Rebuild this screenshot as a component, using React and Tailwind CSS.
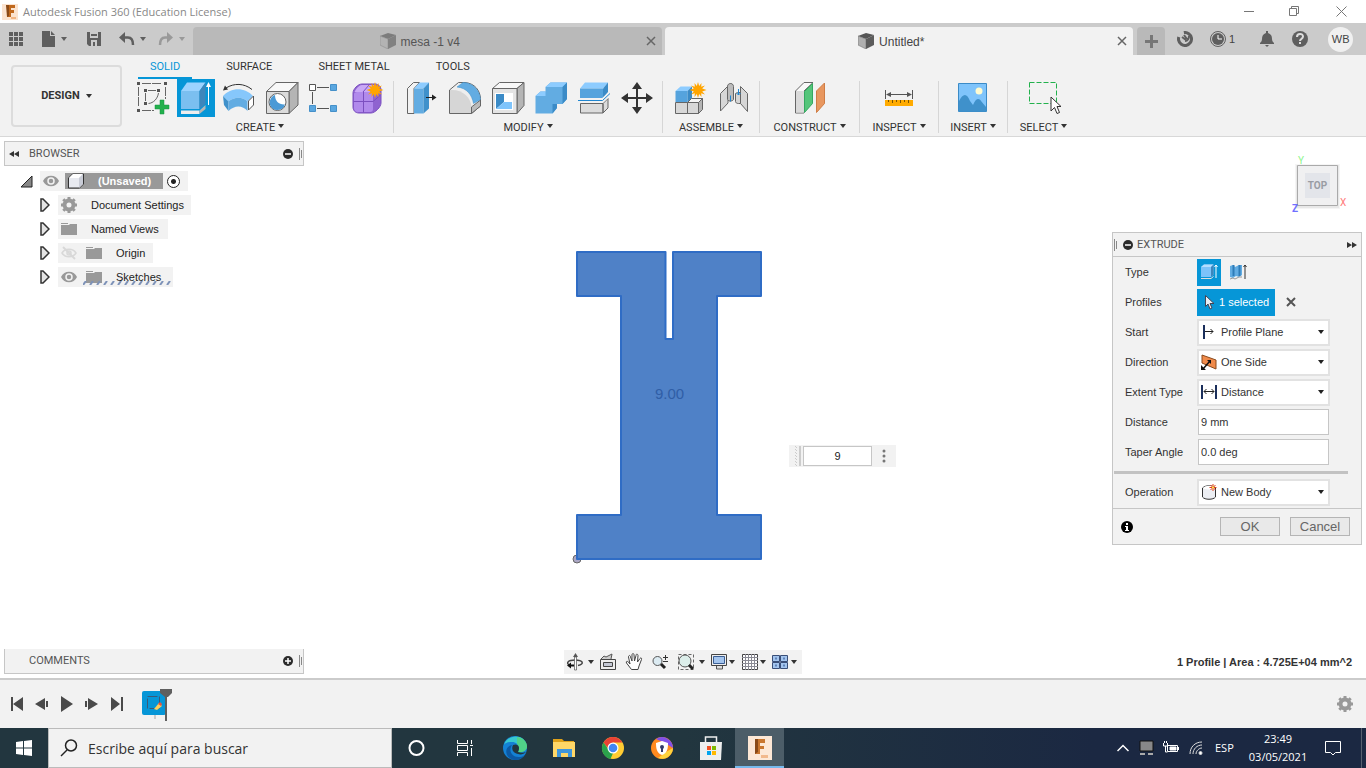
import { useState } from 'react'

const UI = "font-['Liberation_Sans',Arial,sans-serif]"
const CAPS = "font-['Roboto','Liberation_Sans',sans-serif]"
const SEGOE = "font-['Open_Sans','Noto_Sans',sans-serif]"

function Caret({ className = 'text-[#333]' }) {
  return (
    <svg width="6" height="4" viewBox="0 0 6 4" className={`shrink-0 ${className}`} fill="currentColor">
      <path d="M0 0h6L3 4z" />
    </svg>
  )
}

function Star({ x, y }) {
  return (
    <path
      transform={`translate(${x} ${y})`}
      fill="#ffa500"
      d="M0-8 1.200-4 3.500-7 3.200-3.300 7-4.500 4.200-1.500 8.500 0 4.200 1.500 7 4.500 3.200 3.300 3.500 7 1.200 4 0 8-1.200 4-3.500 7-3.200 3.300-7 4.500-4.200 1.500-8.500 0-4.200-1.500-7-4.500-3.200-3.300-3.500-7-1.200-4z"
    />
  )
}

function Icon({ children, size = 38 }) {
  return (
    <svg width={size} height={size} viewBox={`0 0 ${size} ${size}`} fill="none" className="block shrink-0">
      {children}
    </svg>
  )
}

const toolIcons = {
  sketch: (
    <Icon>
      <path d="M8 4.500h20M4.500 8v20M31.500 8v12M8 31.500h12" stroke="#666" strokeDasharray="9 1" />
      <path d="M14 11.500h8M11.500 14v8M24.500 14c-1 6-5 10-10 10.500" stroke="#666" />
      <path d="M3 3h3v3H3zM30 3h3v3h-3zM3 30h3v3H3zM10 10h3v3h-3zM23 10h3v3h-3zM10 23h3v3h-3z" fill="#555" />
      <path d="M26 21h4v5h5v4h-5v5h-4v-5h-5v-4h5z" fill="#22b14c" stroke="#159040" strokeWidth="0.5" />
    </Icon>
  ),
  extrude: (
    <Icon>
      <path d="M4 12 10 3.500h18.500L22.500 12z" fill="#9bd3ff" />
      <path d="M4 12h18.500v18H4z" fill="#7bbff0" />
      <path d="M22.500 12 28.500 3.500V25l-6 5z" fill="#3d86bb" />
      <path d="M4 31.500h18.500V35H4z" fill="#eee" />
      <path d="m22.500 31.500 6-5.500v4l-6 5z" fill="#b5b5b5" />
      <path d="M31.500 8v18" stroke="#fff" />
      <path d="m31.500 3 2.500 5h-5z" fill="#fff" />
    </Icon>
  ),
  revolve: (
    <Icon>
      <path d="M6 9c8-5 18-5 26 1.500" stroke="#333" />
      <path d="m3 11.500 2-5 3 4z" fill="#333" />
      <path d="M3 17c8-9 22-9 30 0l-5.500 5.500c-5-5-13-5-19 0z" fill="#86c7fb" />
      <path d="M3 17l5.500 5.500v9.500L4 26z" fill="#3f91cb" />
      <path d="M8.500 22.500c6-5 14-5 19 0V32c-5-6-13-6-19 0z" fill="#62ace2" />
      <path d="m28.500 22 5-5v9l-5 5z" fill="#fff" stroke="#555" />
    </Icon>
  ),
  hole: (
    <Icon>
      <path d="M3.500 12.500 13 3.500h22l-9 9z" fill="#f8f8f8" stroke="#666" />
      <path d="m26 12.500 9-9V26l-9 8.500z" fill="#b5b5b5" stroke="#666" />
      <path d="M3.500 12.500H26v22H3.500z" fill="#dcdcdc" stroke="#666" />
      <circle cx="14.500" cy="23" r="8.500" fill="#fff" stroke="#666" />
      <path d="M12 16c0 6 4 10 10 9.500a8 8 0 0 1-15 .500c-1-4 1-9 5-10z" fill="#4b9ad6" />
    </Icon>
  ),
  pattern: (
    <Icon>
      <path d="M11 8.500h12M6.500 13v12M11 29.500h12" stroke="#555" />
      <path d="M3.500 5.500h6v6h-6z" fill="#fff" stroke="#555" />
      <path d="M24.500 5.500h6v6h-6zM3.500 26.500h6v6h-6zM24.500 26.500h6v6h-6z" fill="#5aa7e0" stroke="#4590c9" />
    </Icon>
  ),
  form: (
    <Icon>
      <path d="M4 14c0-4 5-9 9-9h13c4 0 6 3 6 6v13c0 4-6 10-10 10H10c-4 0-6-3-6-6z" fill="#8f63d0" stroke="#7b4fc0" />
      <path d="M6 12c3-5 5-6 8-6h10c2 0 2 1 0 3l-3 4H8c-2 0-3 0-2-1z" fill="#c9a8f6" />
      <path d="M5 15c0-1 1-2 3-2h13c2 0 3 1 3 3v14c0 2-1 3-3 3H9c-3 0-4-2-4-4z" fill="#b18aec" />
      <path d="M4.500 22.500H24l7-6M14.500 13v20.500M14 13l6-7" stroke="#7b4fc0" />
      <Star x={26} y={11} />
    </Icon>
  ),
  pressPull: (
    <Icon>
      <path d="m5.500 9.500 6-6h6l-5.500 6v25H5.500z" fill="#f2f2f2" stroke="#666" />
      <path d="m12 9.500 5.500-6H27l-5.500 6z" fill="#8dccff" />
      <path d="M12 9.500h9.500v25H12z" fill="#62ace2" />
      <path d="m21.500 9.500 5.500-6v26l-5.500 5z" fill="#3f91cb" />
      <path d="M24 18.500h7" stroke="#222" />
      <path d="m30 15.500 4.500 3-4.500 3z" fill="#222" />
    </Icon>
  ),
  fillet: (
    <Icon>
      <path d="m4.500 11 9-7.500H20c10 1 15 8 15.500 16V27l-9 7.500h-22z" fill="#eee" stroke="#666" />
      <path d="M5 11c12-1 21 7 21.500 17v6H5z" fill="#d6d6d6" />
      <path d="m26.500 28 9-7v6l-9 7.500z" fill="#bbb" stroke="#666" />
      <path d="M18 3.500c10 0 17 8 17.500 17l-7 4C27 16 22 9 12 8z" fill="#62ace2" stroke="#3f91cb" strokeWidth="0.500" />
    </Icon>
  ),
  shell: (
    <Icon>
      <path d="m4.500 9.500 7-6H36l-7 6z" fill="#f8f8f8" stroke="#666" />
      <path d="m29 9.500 7-6v23l-7 8z" fill="#b5b5b5" stroke="#666" />
      <path d="M4.500 9.500H29v25H4.500z" fill="#e4e4e4" stroke="#666" />
      <path d="M7 14h18v17H7z" fill="#fff" />
      <path d="M8 15h8v8l-8 7z" fill="#3b8bc7" />
      <path d="M16 23h8v7H8z" fill="#7fc4fb" />
    </Icon>
  ),
  combine: (
    <Icon>
      <path d="m4.500 17 5-4.500h5V8l5-4.500H36V20l-4.500 5H26v4l-4.500 5.500h-17z" fill="#62ace2" />
      <path d="m4.500 17 5-4.500h5V17zM14.500 8l5-4.500H36L31.500 8z" fill="#8dccff" />
      <path d="M31.500 8 36 3.500V20l-4.500 5zM21.500 25H26v4l-4.500 5.500z" fill="#3b8bc7" />
    </Icon>
  ),
  split: (
    <Icon>
      <path d="m6 9.500 5-6h23l-5 6z" fill="#8dccff" />
      <path d="M6 9.500h23V19H6z" fill="#55a3dd" />
      <path d="m29 9.500 5-6V13l-5 6z" fill="#3b8bc7" />
      <path d="M6.500 24.500H29V34H6.500zM29 24.500l5-5V29l-5 5z" fill="#dcdcdc" stroke="#666" />
      <path d="M4 21.500h24.500l7.500-7" stroke="#f2f2f2" strokeWidth="4" />
      <path d="M4 21.500h24.500l7.500-7" stroke="#1f86d0" />
    </Icon>
  ),
  move: (
    <Icon>
      <path d="M20 7v24M8 19h24" stroke="#333" strokeWidth="2" />
      <path d="m20 3 5 7H15zM20 35l5-7H15zM4 19l7-5v10zM36 19l-7-5v10z" fill="#333" />
    </Icon>
  ),
  component: (
    <Icon>
      <path d="m4.500 12 5-4.500H21L16.500 12z" fill="#8dccff" />
      <path d="M4.500 12h12v11h-12z" fill="#55a3dd" />
      <path d="M16.500 12 21 7.500V19l-4.500 4z" fill="#3b8bc7" />
      <path d="M4.500 23.500h12v11h-12zM16.500 23.500h11v11h-11z" fill="#d8d8d8" stroke="#666" />
      <path d="m16.500 23.500 4-4h11l-4 4z" fill="#f6f6f6" stroke="#666" />
      <path d="m27.500 23.500 4-4v11l-4 4z" fill="#b5b5b5" stroke="#666" />
      <Star x={27} y={11} />
    </Icon>
  ),
  joint: (
    <Icon>
      <path d="M6.500 14.500 14 7c1-1 1-2 3-2h1v16c-1 1-3 1-4 0V24l-7.500 8z" fill="#d6d6d6" stroke="#666" />
      <path d="M13.500 7.500c0-4 6-4 6 0v13c-1 2-5 2-6 0z" fill="#bcbcbc" stroke="#666" />
      <path d="m26.500 7.500 7 7v18l-7-8h-2c-2 0-3-1-3-2v-8c1-1 3-1 5-1z" fill="#d6d6d6" stroke="#666" />
      <path d="M26.500 8v16.500" stroke="#666" />
      <path d="M16.500 16.500v6M24.500 10v6M22.500 14l2 2 2-2" stroke="#1f86d0" />
    </Icon>
  ),
  plane: (
    <Icon>
      <path d="M4.500 12 13 3.500h9l-9 8.500v22H4.500z" fill="#f8f8f8" stroke="#666" />
      <path d="M5 12h8v21.500H5z" fill="#dadada" />
      <path d="M13.500 12.500 21.500 4.500v20l-8 9z" fill="#55c57a" stroke="#35a860" />
      <path d="m25.500 12 8-8v20.500l-8 9z" fill="#e8975f" stroke="#cf7d45" />
    </Icon>
  ),
  measure: (
    <Icon>
      <path d="M5.500 11v9M32.500 11v9M8 15.500h22" stroke="#555" />
      <path d="m6 15.500 5-2.500v5zM32 15.500 27 13v5z" fill="#555" />
      <path d="M5 21h28v6H5z" fill="#ffab00" />
      <path d="M8.500 21v2M12.500 21v3M16.500 21v2M20.500 21v3M24.500 21v2M28.500 21v3" stroke="#7a5200" />
    </Icon>
  ),
  picture: (
    <Icon>
      <path d="M4.500 4.500h28v28h-28z" fill="#7fc4fb" stroke="#3b8bc7" />
      <circle cx="25" cy="12" r="3.500" fill="#fffbd0" />
      <path d="M5 22c4-8 8-8 11 0l3 4c3-7 6-7 8-4l5 6v4.500H5z" fill="#3f91cb" />
    </Icon>
  ),
  select: (
    <Icon>
      <path d="M4.500 3.500h27v21h-27z" stroke="#22b14c" strokeDasharray="5 2" />
      <path d="M26 18v14l3.500-3.500 2.500 6 2.500-1-2.500-6h4z" fill="#fff" stroke="#333" strokeLinejoin="round" />
    </Icon>
  ),
}

const groups = [
  { label: 'CREATE', width: 'w-[266px]', tools: ['sketch', 'extrude', 'revolve', 'hole', 'pattern', 'form'] },
  { label: 'MODIFY', width: 'w-[268px]', tools: ['pressPull', 'fillet', 'shell', 'combine', 'split', 'move'] },
  { label: 'ASSEMBLE', width: 'w-[96px]', tools: ['component', 'joint'] },
  { label: 'CONSTRUCT', width: 'w-[99px]', tools: ['plane'] },
  { label: 'INSPECT', width: 'w-[78px]', tools: ['measure'] },
  { label: 'INSERT', width: 'w-[68px]', tools: ['picture'] },
  { label: 'SELECT', width: 'w-[71px]', tools: ['select'] },
]

function TitleBar() {
  return (
    <header className={`flex h-[23px] items-center bg-white pl-[2px] text-[#888] ${SEGOE}`}>
      <svg width="16" height="16" viewBox="0 0 16 16" className="mr-[5px]">
        <path d="M0 0h16v16H0z" fill="#fbe3cf" />
        <path d="M4 1h9v3H9v2h3v3H9v4H5V4z" fill="#c0681c" />
        <path d="M4 1h3v11l-2 1z" fill="#8a4a18" />
        <path d="M9 13h5v2H9z" fill="#f3b683" />
      </svg>
      <h1 className="pt-px text-[11px]">Autodesk Fusion 360 (Education License)</h1>
      <div className="ml-auto mr-px flex">
        <button aria-label="Minimize" className="flex h-5 w-[46px] items-center justify-center">
          <svg width="11" height="11" stroke="#777"><path d="M0 5.500h10" /></svg>
        </button>
        <button aria-label="Restore" className="flex h-5 w-[45px] items-center justify-center">
          <svg width="11" height="11" fill="none" stroke="#777"><path d="M.5 2.500h7v7h-7zM2.500 2.500v-2h7v7h-2" /></svg>
        </button>
        <button aria-label="Close" className="flex h-5 w-[48px] items-center justify-center">
          <svg width="11" height="11" stroke="#777"><path d="m.5.5 10 10m0-10-10 10" /></svg>
        </button>
      </div>
    </header>
  )
}

function DocCube({ dim }) {
  return (
    <svg width="16" height="16" viewBox="0 0 16 16" className={dim ? 'opacity-60' : ''}>
      <path d="m0 3 8-3 8 2-8 4z" fill="#555" />
      <path d="m0 3 8 3v10l-8-4z" fill="#b0b0b0" stroke="#666" strokeWidth="0.500" />
      <path d="m8 6 8-4v10l-8 4z" fill="#5c5c5c" />
    </svg>
  )
}

function DocTab({ name, active }) {
  return (
    <div
      className={`flex flex-1 items-center rounded-t-[4px] pr-[5px] text-[12px] ${
        active ? 'bg-[#f2f2f2] text-[#444]' : 'bg-[#b9b9b9] text-[#555]'
      }`}
    >
      <button className="flex flex-1 items-center justify-center gap-[5px] pl-[2px]">
        <DocCube dim={!active} />
        <span className="pt-px">{name}</span>
      </button>
      <button aria-label={`Close ${name}`} className="flex size-3 items-center justify-center">
        <svg width="10" height="10" stroke="#666" strokeWidth="1.500"><path d="m1 1 8 8m0-8-8 8" /></svg>
      </button>
    </div>
  )
}

function AppBar() {
  return (
    <div className={`flex h-8 bg-[#cbcbcb] text-[#5f5f5f] ${UI}`}>
      <div className="flex w-[193px] shrink-0 items-center pl-2">
        <button aria-label="Data panel">
          <svg width="16" height="16" fill="currentColor">
            <path d="M1 1h4v4H1zM6 1h4v4H6zM11 1h4v4h-4zM1 6h4v4H1zM6 6h4v4H6zM11 6h4v4h-4zM1 11h4v4H1zM6 11h4v4H6zM11 11h4v4h-4z" />
          </svg>
        </button>
        <button aria-label="File" className="ml-[17px] flex items-center gap-1">
          <svg width="16" height="16" fill="currentColor"><path d="M1 0h8v5h5v11H1zM10 0l4 4h-4z" /></svg>
          <Caret className="text-[#5f5f5f]" />
        </button>
        <button aria-label="Save" className="ml-[19px]">
          <svg width="16" height="16" viewBox="0 0 16 16">
            <path d="M1 1h14v14H3l-2-2z" fill="currentColor" />
            <path d="M4 1h8v6H4zM5 9h6v6H5z" fill="#cbcbcb" />
            <path d="M5 3h6v2H5zM7 11h2v4H7z" fill="currentColor" />
          </svg>
        </button>
        <button aria-label="Undo" className="ml-[17px] flex items-center gap-[5px]">
          <svg width="16" height="16">
            <path d="M4 6.500h5c4 0 5 3 5 7.500" fill="none" stroke="currentColor" strokeWidth="2.500" />
            <path d="M0 6.500 6 1v11z" fill="currentColor" />
          </svg>
          <Caret className="text-[#5f5f5f]" />
        </button>
        <button aria-label="Redo" className="ml-3 flex items-center gap-[5px] text-[#999]">
          <svg width="16" height="16">
            <path d="M11 6.500H7C3 6.500 2 9.500 2 14" fill="none" stroke="currentColor" strokeWidth="2.500" />
            <path d="m15 6.500-6-5.500v11z" fill="currentColor" />
          </svg>
          <Caret className="text-[#999]" />
        </button>
      </div>
      <div className="flex flex-1 gap-[3px] pt-1">
        <DocTab name="mesa -1 v4" />
        <DocTab name="Untitled*" active />
      </div>
      <button aria-label="New tab" className="ml-1 mt-1 flex w-7 items-center justify-center rounded-t-[4px] bg-[#b9b9b9]">
        <svg width="14" height="14" fill="#777"><path d="M6 1h3v5h5v3H9v5H6V9H1V6h5z" /></svg>
      </button>
      <div className="flex w-[201px] shrink-0 items-center pl-3 text-[12px]">
        <button aria-label="Extensions">
          <svg width="16" height="16" fill="none" stroke="currentColor">
            <circle cx="8" cy="8" r="6.500" strokeWidth="3" strokeDasharray="33 8" transform="rotate(-100 8 8)" />
            <path d="m5 6 4 3M7 4l3 4M8 10c3 0 4-3 4-5" strokeWidth="2" />
          </svg>
        </button>
        <button className="ml-[17px] flex items-center gap-[3px] text-[11px] text-[#444]">
          <svg width="16" height="16" viewBox="0 0 16 16">
            <circle cx="8" cy="8" r="7.500" fill="none" stroke="#5f5f5f" />
            <circle cx="8" cy="8" r="6" fill="#5f5f5f" />
            <path d="M8 4v4h4" fill="none" stroke="#fff" />
          </svg>
          1
        </button>
        <button aria-label="Notifications" className="ml-[24px]">
          <svg width="16" height="16" fill="currentColor">
            <path d="M7 0h2v2c3 1 4 3 4 6 0 2 1 3 2 4v1H1v-1c1-1 2-2 2-4 0-3 1-5 4-6zM6 14h4l-2 2z" />
          </svg>
        </button>
        <button aria-label="Help" className="ml-[17px]">
          <svg width="16" height="16">
            <circle cx="8" cy="8" r="8" fill="currentColor" />
            <path d="M5 6c0-4 6-4 6-.5C11 8 8 8 8 10M8 11v2" fill="none" stroke="#ddd" strokeWidth="2" />
          </svg>
        </button>
        <button className="ml-5 size-[25px] rounded-full bg-[#f0f0f0] text-[11px] text-[#444]">WB</button>
      </div>
    </div>
  )
}

function Ribbon({ tool, onTool }) {
  return (
    <div className={`flex h-[82px] border-b border-[#d8d8d8] bg-[#f2f2f2] text-[11px] text-[#333] ${CAPS}`}>
      <button className="ml-[11px] mt-[10px] flex h-[62px] w-[111px] items-center justify-center gap-[6px] rounded-[4px] border-2 border-[#dcdcdc] font-bold">
        <span className="pt-px">DESIGN</span>
        <Caret />
      </button>
      <div className="ml-[5px] flex-1">
        <nav className="flex h-6 gap-[22px] pl-[11px]">
          {['SOLID', 'SURFACE', 'SHEET METAL', 'TOOLS'].map(t => (
            <button
              key={t}
              className={`border-b-2 px-3 pt-[2px] ${t === 'SOLID' ? 'border-[#0696d7] text-[#0696d7]' : 'border-transparent'}`}
            >
              {t}
            </button>
          ))}
        </nav>
        <div className="flex">
          {groups.map((g, i) => (
            <div key={g.label} className="flex">
              {i > 0 && <span className="mt-[2px] h-[52px] w-px bg-[#d6d6d6]" />}
              <div className={`flex flex-col items-center ${g.width}`}>
                <div className="flex gap-[5px]">
                  {g.tools.map(t => (
                    <button
                      key={t}
                      aria-label={t}
                      onClick={() => onTool(t)}
                      className={t === tool ? 'bg-[#0696d7]' : ''}
                    >
                      {toolIcons[t]}
                    </button>
                  ))}
                </div>
                <button className="flex h-5 items-center gap-[3px]">
                  <span className="pt-[2px]">{g.label}</span>
                  <Caret className="mb-[2px] text-[#333]" />
                </button>
              </div>
            </div>
          ))}
        </div>
      </div>
    </div>
  )
}

function Grip() {
  return (
    <svg width="4" height="12" stroke="#888" className="shrink-0"><path d="M.5 0v12M2.500 2v8" /></svg>
  )
}

function RoundSign({ plus }) {
  return (
    <svg width="10" height="10" viewBox="0 0 10 10" className="block shrink-0">
      <circle cx="5" cy="5" r="5" fill="#2b2b2b" />
      <path d={plus ? 'M2 5h6M5 2v6' : 'M2 5h6'} stroke="#fff" strokeWidth="1.500" />
    </svg>
  )
}

function DoubleArrow({ flip }) {
  return (
    <svg width="10" height="6" fill="#333" className={flip ? 'block rotate-180' : 'block'}><path d="M5 0v6L0 3zM10 0v6L5 3z" /></svg>
  )
}

function Eye({ off }) {
  if (off) {
    return (
      <svg width="16" height="16" viewBox="0 0 16 16" fill="none" stroke="#d8d8d8" className="shrink-0">
        <path d="M1 8c3-5 11-5 14 0-3 5-11 5-14 0z" strokeWidth="1.500" />
        <circle cx="8" cy="8" r="2" strokeWidth="1.500" />
        <path d="m2 2 12 12" strokeWidth="2" />
      </svg>
    )
  }
  return (
    <svg width="16" height="16" viewBox="0 0 16 16" className="shrink-0">
      <path d="M0 8c3-7 13-7 16 0-3 7-13 7-16 0z" fill="#999" />
      <circle cx="8" cy="8" r="3" fill="#999" stroke="#f2f2f2" strokeWidth="1.500" />
    </svg>
  )
}

function Folder() {
  return (
    <svg width="16" height="14" fill="#999" className="shrink-0"><path d="M0 1h7v1H0zM0 3h8l1-1h7v11H0z" /></svg>
  )
}

function Gear({ color = '#999' }) {
  return (
    <svg width="16" height="16" viewBox="0 0 16 16" className="shrink-0">
      <circle cx="8" cy="8" r="4.500" fill="none" stroke={color} strokeWidth="4" />
      <path d="M8 0v3M8 13v3M0 8h3M13 8h3M2.300 2.300l2 2M11.700 11.700l2 2M13.700 2.300l-2 2M4.300 11.700l-2 2" stroke={color} strokeWidth="3" />
    </svg>
  )
}

function TreeRow({ children, label }) {
  return (
    <li className="flex h-5 items-center pl-[35px]">
      <button aria-label={`Expand ${label}`} className="mr-2">
        <svg width="11" height="14" viewBox="0 0 11 14" fill="#e4e4e4" stroke="#333" strokeWidth="1.500">
          <path d="M2 1h2l6 6-6 6H2z" />
        </svg>
      </button>
      {children}
    </li>
  )
}

function Browser() {
  return (
    <aside className="w-[300px] text-[11px] text-[#222]">
      <div className={`flex h-[25px] items-center border border-[#c6c6c6] bg-[#f2f2f2] pl-1 text-[#555] ${CAPS}`}>
        <button aria-label="Collapse"><DoubleArrow /></button>
        <h2 className="ml-[10px] flex-1 pt-px">BROWSER</h2>
        <button aria-label="Minimize browser" className="mr-[6px]"><RoundSign /></button>
        <Grip />
      </div>
      <ul className="mt-[5px] flex flex-col gap-1">
        <li className="flex h-5 items-center pl-4">
          <button aria-label="Collapse document" className="mr-[7px]">
            <svg width="13" height="13" viewBox="0 0 13 13"><path d="M1 12h11V1z" fill="#888" stroke="#222" /></svg>
          </button>
          <div className="flex h-5 items-center gap-1 bg-[#f2f2f2] pl-[3px] pr-2">
            <Eye />
            <span className="ml-[2px] flex h-4 w-[98px] items-center bg-[#999] pl-[2px] font-bold text-white">
              <svg width="18" height="16" viewBox="0 0 18 16" className="mr-[13px]">
                <path d="m1.500 5 4-4h11v10l-4 4h-11z" fill="#e8eaf0" stroke="#333" />
                <path d="M2 5h10l4-4H6z" fill="#fff" />
                <path d="M12 5v10l4-4V1z" fill="#c9ccd6" />
              </svg>
              (Unsaved)
            </span>
            <input type="radio" name="active" aria-label="Activate component" defaultChecked className="size-[13px] appearance-none rounded-full border border-[#222] bg-white bg-[radial-gradient(circle,#222_0_2px,transparent_3px)]" />
          </div>
        </li>
        <TreeRow label="Document Settings">
          <span className="flex h-5 items-center bg-[#f2f2f2] pl-[3px] pr-[7px]"><Gear /><span className="ml-[14px]">Document Settings</span></span>
        </TreeRow>
        <TreeRow label="Named Views">
          <span className="flex h-5 items-center bg-[#f2f2f2] pl-[3px] pr-[9px]"><Folder /><span className="ml-[14px]">Named Views</span></span>
        </TreeRow>
        <TreeRow label="Origin">
          <span className="flex h-5 items-center bg-[#f2f2f2] pl-[3px] pr-2"><Eye off /><span className="w-[9px]" /><Folder /><span className="ml-[14px]">Origin</span></span>
        </TreeRow>
        <TreeRow label="Sketches">
          <span className="relative flex h-5 items-center bg-[#f2f2f2] pl-[3px] pr-3">
            <Eye /><span className="w-[9px]" /><Folder /><span className="ml-[14px]">Sketches</span>
            <svg width="90" height="4" stroke="#7d92b8" strokeWidth="2" className="absolute bottom-[2px] left-[25px]">
              {Array.from({ length: 13 }, (_, i) => <path key={i} d={`M${i * 7} 4l3-4`} />)}
            </svg>
          </span>
        </TreeRow>
      </ul>
    </aside>
  )
}

function ViewCube() {
  return (
    <svg width="60" height="62" viewBox="0 0 60 62" className="mr-3 mt-[15px] self-end font-['Roboto',sans-serif] text-[10px]">
      <path d="M5 12h45v45H5z" fill="#000" opacity="0.04" />
      <path d="M6 13h43v43H6z" fill="#000" opacity="0.05" />
      <path d="M7.500 13.500h40v40h-40z" fill="#f0f0f1" stroke="#aaa" />
      <path d="M15 21h25v25H15z" fill="#e3e5ea" />
      <text x="27.500" y="37" textAnchor="middle" fill="#999ca3" className="font-bold">TOP</text>
      <text x="8" y="12" fill="#8df58d">Y</text>
      <text x="2" y="60" fill="#7070ff" className="font-bold">Z</text>
      <text x="50" y="54" fill="#ff7c7c">X</text>
    </svg>
  )
}

function Row({ label, htmlFor, children }) {
  return (
    <div className="flex h-[30px] items-center">
      <label htmlFor={htmlFor} className="w-[72px] shrink-0">{label}</label>
      {children}
    </div>
  )
}

function IconSelect({ id, icon, options }) {
  return (
    <div className="relative h-[27px] w-[133px]">
      <span className="pointer-events-none absolute left-1 top-[5px]">{icon}</span>
      <select id={id} className="h-full w-full appearance-none border-2 border-[#e2e2e2] bg-white pl-[22px] outline-none">
        {options.map(o => <option key={o}>{o}</option>)}
      </select>
      <span className="pointer-events-none absolute right-[6px] top-[11px]"><Caret className="block text-[#222]" /></span>
    </div>
  )
}

function ExtrudePanel({ distance, setDistance }) {
  const field = 'ml-px h-[26px] w-[131px] border border-[#c6c6c6] bg-white px-[2px] outline-none'
  return (
    <section className="mt-[18px] border border-[#c6c6c6] bg-[#f2f2f2] text-[11px] text-[#333]">
      <div className={`flex h-6 items-center border-b border-[#c6c6c6] pl-px pr-1 text-[#555] ${CAPS}`}>
        <Grip />
        <span className="ml-[5px]"><RoundSign /></span>
        <h2 className="ml-1 flex-1 pt-px">EXTRUDE</h2>
        <button aria-label="Expand panel"><DoubleArrow flip /></button>
      </div>
      <div className="pl-3">
        <Row label="Type">
          <button aria-label="Extrude" className="flex h-[27px] w-6 items-center justify-center bg-[#0696d7]">
            <Icon size={18}>
              <path d="m1 4 3-2.500h9.500v10L11 14H1z" fill="#7cc3fa" />
              <path d="m1 4 3-2.500h9.500L11 4z" fill="#b4deff" />
              <path d="m11 4 2.500-2.500v10L11 14z" fill="#3d86bb" />
              <path d="M1 15.500h10l2.500-2" stroke="#ddd" />
              <path d="M16 2v13M14.500 4 16 2l1.500 2" stroke="#fff" />
            </Icon>
          </button>
          <button aria-label="Thin extrude" className="ml-2">
            <Icon size={18}>
              <path d="m1 3 3-1 2 2 4-2h3v10l-3 2-3-1-3 2-3-1z" fill="#62ace2" />
              <path d="M4.500 2v11M10.500 2v11" stroke="#2e7cb8" strokeWidth="2" />
              <path d="m1 16 3-1 2 1 4-2h3" stroke="#999" />
              <path d="M16 2v14M14.500 4 16 2l1.500 2" stroke="#333" />
            </Icon>
          </button>
        </Row>
        <Row label="Profiles">
          <button className="flex h-[27px] w-[78px] items-center gap-1 bg-[#0696d7] pl-2 text-white">
            <svg width="10" height="15" viewBox="0 0 10 15"><path d="M.5.5v11l2.500-2.500 2 5 2-1-2-4.500h4z" fill="#e9eef5" stroke="#445" /></svg>
            1 selected
          </button>
          <button aria-label="Clear selection" className="ml-[11px]">
            <svg width="10" height="10" stroke="#555" strokeWidth="2"><path d="m1 1 8 8m0-8-8 8" /></svg>
          </button>
        </Row>
        <Row label="Start" htmlFor="start">
          <IconSelect id="start" options={['Profile Plane', 'Offset']} icon={
            <Icon size={16}><path d="M3 1v14" stroke="#1b2f5c" strokeWidth="2" /><path d="M4 7.500h8M9.500 5l2.500 2.500L9.500 10" stroke="#222" /></Icon>
          } />
        </Row>
        <Row label="Direction" htmlFor="direction">
          <IconSelect id="direction" options={['One Side', 'Two Sides']} icon={
            <Icon size={16}>
              <path d="m1 1 14 5v9L1 9z" fill="#f08a4a" stroke="#8a4a1c" />
              <path d="m2 15 7-8" stroke="#111" strokeWidth="1.500" />
              <path d="M0 16v-5l5 5zM10 6v4L6 6z" fill="#111" />
            </Icon>
          } />
        </Row>
        <Row label="Extent Type" htmlFor="extent">
          <IconSelect id="extent" options={['Distance', 'To Object', 'All']} icon={
            <Icon size={16}>
              <path d="M1 1v14M15 1v14" stroke="#1b2f5c" strokeWidth="2" />
              <path d="M3 7.500h10M5.500 5 3 7.500 5.500 10M10.500 5 13 7.500 10.500 10" stroke="#222" />
            </Icon>
          } />
        </Row>
        <Row label="Distance" htmlFor="distance">
          <input id="distance" value={`${distance} mm`} onChange={e => setDistance(e.target.value.replace(/[^\d.]/g, ''))} className={field} />
        </Row>
        <Row label="Taper Angle" htmlFor="taper">
          <input id="taper" defaultValue="0.0 deg" className={field} />
        </Row>
      </div>
      <hr className="ml-px mr-[13px] mt-1 border-0 border-t-[3px] border-[#c2c2c2]" />
      <div className="border-b border-[#c6c6c6] pb-px pl-3 pt-[3px]">
        <Row label="Operation" htmlFor="operation">
          <IconSelect id="operation" options={['New Body', 'Join', 'Cut']} icon={
            <Icon size={16}>
              <path d="M1.500 4v9c2 3 11 3 13 0V4c-3-3-10-3-13 0z" fill="#eceef3" stroke="#333" />
              <path d="M2 4c3 2 9 2 12 0-3-3-9-3-12 0z" fill="#fff" />
              <path d="M12 0v7M8.500 3.500h7M9.500 1l5 5M14.500 1l-5 5" stroke="#e0401c" />
              <path d="M11 2.500h2v2h-2z" fill="#ffe04a" />
            </Icon>
          } />
        </Row>
      </div>
      <div className="flex h-[35px] items-center gap-[10px] pl-2 pr-[11px] text-[13px] text-[#666]">
        <svg width="12" height="12" viewBox="0 0 12 12" className="mr-auto" role="img" aria-label="Info">
          <circle cx="6" cy="6" r="6" fill="#000" />
          <path d="M5 2h2v2H5zM4 5h3v4h1v1H4V9h1V6H4z" fill="#fff" />
        </svg>
        <button className="h-[19px] w-[60px] border border-[#b5b5b5] bg-[#e9e9e9] leading-none">OK</button>
        <button className="h-[19px] w-[60px] border border-[#b5b5b5] bg-[#e9e9e9] leading-none">Cancel</button>
      </div>
    </section>
  )
}

const navTools = [
  { name: 'Orbit', cls: 'gap-1', caret: true, icon: (
    <>
      <path d="M3 12c-3-2-1-5 6-5 8 0 10 4 3 5.500" stroke="#444" strokeWidth="1.500" />
      <path d="M8.500 4h2v13h-2z" fill="#fff" stroke="#555" strokeWidth="0.700" />
      <path d="M9.500 0 12 4H7z" fill="#555" />
      <path d="M3 12.500h5" stroke="#111" strokeWidth="2" /><path d="m1 12.500 4-3v6z" fill="#111" />
    </>
  ) },
  { name: 'Look at', cls: 'ml-[5px]', icon: (
    <>
      <path d="m2 6 3-3 2 1 6-3-1 5" fill="#ccc" stroke="#555" />
      <path d="M1.500 6.500h15v10h-15z" fill="#eee" stroke="#444" /><path d="M4.500 9.500h9v4h-9z" fill="#c4c8d4" stroke="#444" />
    </>
  ) },
  { name: 'Pan', cls: 'ml-2', icon: (
    <path d="M6.500 16.500 1.500 10c-1-2 1-2 2-1L5 11 3.500 4c0-2 2-2 2 0L7 8 7 2c0-2 2-2 2 0l.5 6L11 2.500c0-2 2-1.500 2 0L12.500 9 15 5.500c1-1.500 2 0 1.500 1L14 13l-1 3.500z" fill="#fff" stroke="#444" strokeLinejoin="round" />
  ) },
  { name: 'Zoom', cls: 'ml-2', icon: (
    <>
      <circle cx="6.500" cy="8" r="4.500" fill="#dcebf2" stroke="#555" />
      <path d="m10 11 4 4" stroke="#222" strokeWidth="3" /><path d="M12 4.500h5M14.500 2v5M12 8.500h5" stroke="#333" />
    </>
  ) },
  { name: 'Fit', cls: 'ml-2 gap-1', caret: true, icon: (
    <>
      <path d="M1.500 1.500h15v15h-15z" stroke="#666" strokeDasharray="3 2" />
      <circle cx="8" cy="8" r="6" fill="#dceeea" stroke="#555" /><path d="m12 12 4 4" stroke="#222" strokeWidth="3" />
    </>
  ) },
  { name: 'Display settings', cls: 'ml-[5px] gap-px', caret: true, icon: (
    <>
      <path d="M1.500 1.500h15v11h-15z" fill="#eee" stroke="#444" /><path d="M3.500 3.500h11v7h-11z" fill="#a4c5ee" stroke="#3a5e94" />
      <path d="M6.500 13v3h6v-3" fill="#ddd" stroke="#555" />
    </>
  ) },
  { name: 'Grid', cls: 'ml-[6px] gap-px', caret: true, icon: (
    <>
      <path d="M1.500 1.500h15v15h-15z" fill="#fff" stroke="#444" />
      <path d="M4.500 1v16M7.500 1v16M10.500 1v16M13.500 1v16M1 4.500h16M1 7.500h16M1 10.500h16M1 13.500h16" stroke="#8a8a94" />
    </>
  ) },
  { name: 'Viewports', cls: 'ml-[5px] gap-[2px]', caret: true, icon: (
    <>
      <path d="M1.500 2.500h7v6h-7zM9.500 2.500h7v6h-7zM1.500 9.500h7v6h-7zM9.500 9.500h7v6h-7z" fill="#a4c5ee" stroke="#3a4f78" />
      <path d="M4 5.500h2M12 5.500h2M4 12.500h2M12 12.500h2" stroke="#5f83b8" strokeWidth="2" />
    </>
  ) },
]

function NavBar() {
  return (
    <div className="flex h-6 items-center bg-[#f2f2f2] pl-[2px] pr-[5px]">
      {navTools.map(t => (
        <button key={t.name} aria-label={t.name} className={`flex items-center ${t.cls}`}>
          <Icon size={18}>{t.icon}</Icon>
          {t.caret && <Caret />}
        </button>
      ))}
    </div>
  )
}

function Canvas() {
  const [distance, setDistance] = useState('9')
  return (
    <main className={`relative flex flex-1 flex-col bg-white ${UI}`}>
      {/* sketch profile */}
      <svg width="196" height="320" viewBox="0 0 196 320" className="absolute left-[570px] top-[110px]">
        <circle cx="7" cy="312" r="4" fill="#aaa6c4" stroke="#666" />
        <path d="M7 5h88.500v87h7.500V5h88v44h-44v219h44v44H7v-44h44V49H7z" fill="#4f81c7" stroke="#2f6cc5" strokeWidth="2" strokeLinejoin="round" />
        <text x="99.500" y="152" textAnchor="middle" fill="#2f5ea6" className="text-[15px]">9.00</text>
      </svg>
      <div className="absolute left-[789px] top-[308px] flex h-[22px] w-[107px] items-center bg-[#f2f2f2] pl-[5px] text-[11px]">
        <svg width="8" height="20"><path d="M1.500 0v20M2.500 1v19" stroke="#ccc" strokeDasharray="1 2" /><path d="M6 0v20" stroke="#ccc" strokeWidth="2" /></svg>
        <input aria-label="Distance" value={distance} onChange={e => setDistance(e.target.value)} className="ml-px h-5 w-[69px] border border-[#c6c6c6] bg-white text-center text-[#222] outline-none" />
        <button aria-label="More" className="ml-[10px]">
          <svg width="4" height="14" fill="#777"><circle cx="2" cy="2" r="1.500" /><circle cx="2" cy="7" r="1.500" /><circle cx="2" cy="12" r="1.500" /></svg>
        </button>
      </div>

      <div className="flex justify-between px-1">
        <div className="pt-1"><Browser /></div>
        <div className="flex w-[250px] flex-col">
          <ViewCube />
          <ExtrudePanel distance={distance} setDistance={setDistance} />
        </div>
      </div>

      <div className="mt-auto grid grid-cols-[1fr_auto_1fr] items-center pb-1">
        <div className={`ml-1 flex h-[25px] w-[300px] items-center border border-t-0 border-[#c6c6c6] bg-[#f2f2f2] pl-6 text-[11px] text-[#555] ${CAPS}`}>
          <h2 className="flex-1 pt-px">COMMENTS</h2>
          <button aria-label="Expand comments" className="mr-[6px]"><RoundSign plus /></button>
          <Grip />
        </div>
        <NavBar />
        <p className="pr-[14px] pt-px text-right text-[11px] font-bold text-[#333]">1 Profile | Area : 4.725E+04 mm^2</p>
      </div>
    </main>
  )
}

const playback = [
  ['To start', 'M3 1h2v14H3zM15 1v14L5 8z'],
  ['Step back', 'M12 2v12L2 8zM13 5h2v6h-2z'],
  ['Play', 'M3 0v16l12-8z'],
  ['Step forward', 'M2 5h2v6H2zM5 2v12l10-6z'],
  ['To end', 'M3 1v14l9-7zM13 1h2v14h-2z'],
]

function Timeline() {
  return (
    <div className="flex h-[50px] items-center border-t-2 border-[#cbcbcb] bg-[#f2f2f2] pl-2 pr-[13px]">
      <div className="flex gap-2">
        {playback.map(([name, d]) => (
          <button key={name} aria-label={name}>
            <svg width="17" height="16" fill="#4a4a4a"><path d={d} /></svg>
          </button>
        ))}
      </div>
      <button aria-label="Sketch1" className="ml-[17px]">
        <svg width="32" height="34" viewBox="0 0 32 34">
          <path d="M12 26h2v6h-2z" fill="#ccc" />
          <rect y="4" width="24" height="24" rx="2" fill="#0696d7" />
          <path d="M5.500 9.500h12v12h-12z" fill="none" stroke="#3a5a78" strokeDasharray="10 2" />
          <path d="m12 22 5-6 3 3-5 4z" fill="#ffcf5c" /><path d="m16 17 2-2 2 2-1 2z" fill="#f0543c" />
          <path d="M18 2h12v4l-4 4h-1v24h-2V10l-5-4z" fill="#5f5f5f" />
        </svg>
      </button>
      <button aria-label="Timeline settings" className="ml-auto"><Gear /></button>
    </div>
  )
}

const apps = [
  { name: 'Cortana', icon: <circle cx="11.500" cy="12" r="7" stroke="#fff" strokeWidth="2" /> },
  { name: 'Task view', icon: (
    <path d="M3.500 4v3.500h10V4M3.500 20v-3.500h10V20M3.500 9.500h10v5h-10zM17.500 4v4M17.500 12v8M16 9.500h3" stroke="#fff" />
  ) },
  { name: 'Edge', icon: (
    <>
      <circle cx="12" cy="12" r="12" fill="#1481d4" />
      <path d="M1 9C4-2 22-3 24 10c0 5-5 7-9 6 3-6-1-10-6-10-4 0-7 1-8 3z" fill="#38c8d0" />
      <path d="M14 1c7 1 11 6 10 11-2 4-6 5-9 4 1-2 1-5-1-8z" fill="#5bd66a" opacity="0.700" />
      <path d="M9 9c-4 6 0 13 8 12 2 0 4-1 5-3-4 8-14 8-18 1C2 14 4 10 9 9z" fill="#0c59a4" />
      <path d="M15 16c3-6-1-9-5-7-2 4 0 8 5 9 3 1 6 0 8-2-2 1-5 1-8 0z" fill="#22363f" />
    </>
  ) },
  { name: 'File Explorer', icon: (
    <>
      <path d="M1 3h9l2 2h10v4H1z" fill="#e0a21a" /><path d="M1 6h22v15H1z" fill="#ffd767" />
      <path d="M5 13h15v8h-4v-4H9v4H5z" fill="#3f96dc" />
    </>
  ) },
  { name: 'Chrome', icon: (
    <>
      <circle cx="12" cy="12" r="11" fill="#fc3" />
      <path d="M2.500 6.500a11 11 0 0 1 19 0H12l-4 7z" fill="#e94235" />
      <path d="M2.500 6.500 8 14l4 3-2.500 6A11 11 0 0 1 2.500 6.500z" fill="#2ba24c" />
      <circle cx="12" cy="12" r="5.500" fill="#fff" /><circle cx="12" cy="12" r="4.300" fill="#4285f4" />
    </>
  ) },
  { name: 'Secure browser', icon: (
    <>
      <circle cx="12" cy="12" r="11" fill="#ff8a1f" />
      <path d="M6 3a11 11 0 0 1 17 9l-8-5z" fill="#8250e8" /><path d="M23 12A11 11 0 0 1 8 22l8-6z" fill="#ffd23c" />
      <path d="m12 5 6 2c0 6-1 10-6 12-5-2-6-6-6-12z" fill="#fff" /><circle cx="12" cy="11" r="2" fill="#333a6b" /><path d="M11 12h2v4h-2z" fill="#333a6b" />
    </>
  ) },
  { name: 'Microsoft Store', icon: (
    <>
      <path d="M6.500 6V1h11v5" stroke="#eee" strokeWidth="1.500" /><path d="M1 6h22l-1 18H1z" fill="#eee" />
      <path d="M8 10h4v4H8z" fill="#f25022" /><path d="M13 10h4v4h-4z" fill="#7fba00" /><path d="M8 15h4v4H8z" fill="#00a4ef" /><path d="M13 15h4v4h-4z" fill="#ffb900" />
    </>
  ) },
  { name: 'Fusion 360', active: true, icon: (
    <>
      <path d="M0 0h24v24H0z" fill="#fde8d6" />
      <path d="M7 3h10v4h-5v3h4v3h-4v5H7z" fill="#c9772f" /><path d="M7 3h3v13l-3 2z" fill="#8a4a18" />
      <path d="M13 19h7v3h-7z" fill="#f2b98c" />
    </>
  ) },
]

function Taskbar() {
  return (
    <footer className={`flex h-10 bg-linear-to-r from-[#22363f] from-50% to-[#1b2842] to-80% text-[11px] text-white ${SEGOE}`}>
      <button aria-label="Start" className="flex w-12 items-center justify-center">
        <svg width="16" height="16" fill="#fff"><path d="M0 2l7-1v6.500H0zM8 1l8-1v7.500H8zM0 8.500h7V15l-7-1zM8 8.500h8V16l-8-1z" /></svg>
      </button>
      <label className="flex w-[344px] items-center border border-[#bbb] bg-[#f2f2f2] pl-[11px]">
        <svg width="18" height="18" fill="none" stroke="#222" strokeWidth="1.500"><circle cx="11" cy="6.500" r="5.500" /><path d="m7 11-6 6" /></svg>
        <input placeholder="Escribe aquí para buscar" aria-label="Escribe aquí para buscar" className="ml-[10px] flex-1 bg-transparent text-[14px] outline-none placeholder:text-[#333]" />
      </label>
      {apps.map(a => (
        <button
          key={a.name}
          aria-label={a.name}
          className={`flex w-[49px] items-center justify-center border-b-2 pt-px ${a.active ? 'border-[#76b9ed] bg-[#4c5d68]' : 'border-transparent'}`}
        >
          <Icon size={24}>{a.icon}</Icon>
        </button>
      ))}
      <div className="ml-auto flex items-center">
        <button aria-label="Show hidden icons">
          <svg width="12" height="8" fill="none" stroke="#fff" strokeWidth="1.500" className="mr-[10px]"><path d="m.5 7 5.500-5.500L11.500 7" /></svg>
        </button>
        <svg width="16" height="16"><path d="M1 1h13v10H1z" fill="#888" stroke="#111" /><path d="M1 13h5v2H1zM9 13h5v2H9z" fill="#aaa" /></svg>
        <svg width="18" height="14" fill="none" stroke="#fff" className="ml-[7px]"><path d="M5.500 4.500h10v6h-10zM16.500 6v3M1.500 2v3h4V2M2.500 0v2M4.500 0v2M3.500 5v6h2" /><path d="M8 6h6v3H8z" fill="#fff" /></svg>
        <svg width="14" height="14" fill="none" stroke="#ddd" className="ml-[9px]"><path d="M1 13C1 6 6 1 13 1M4 13c0-5 4-9 9-9M7 13c0-3 3-6 6-6" /><circle cx="11.500" cy="12" r="1.500" fill="#fff" /></svg>
        <button className="ml-3 w-[18px]">ESP</button>
        <button className="ml-[15px] w-[60px] text-center leading-[18px]">23:49<br />03/05/2021</button>
        <button aria-label="Action center" className="ml-[17px] mr-[19px]">
          <svg width="17" height="17" fill="none" stroke="#fff"><path d="M.5 1.500h15v11h-5L8 15l-2.500-2.500h-5z" /></svg>
        </button>
        <span className="mr-1 h-10 w-px bg-[#56606f]" />
      </div>
    </footer>
  )
}

export default function App() {
  const [tool, setTool] = useState('extrude')
  return (
    <div className="flex min-h-screen flex-col">
      <TitleBar />
      <AppBar />
      <Ribbon tool={tool} onTool={setTool} />
      <Canvas />
      <Timeline />
      <Taskbar />
    </div>
  )
}
